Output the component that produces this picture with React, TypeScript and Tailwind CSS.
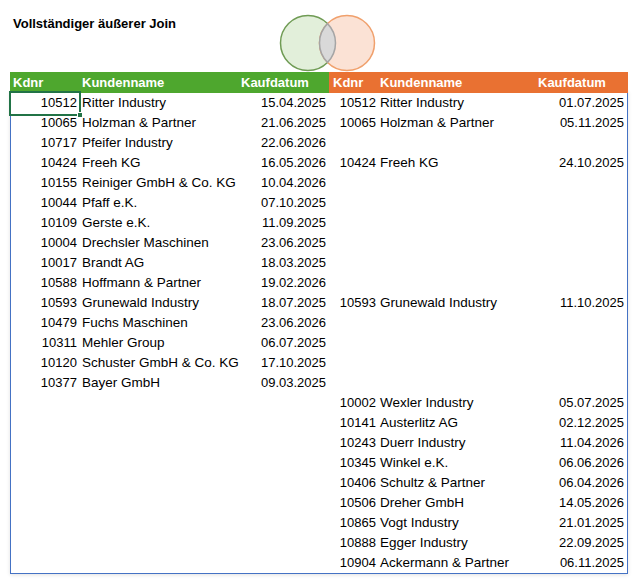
type Row = { id: string; name: string; date: string };

const left: (Row | null)[] = [
  { id: "10512", name: "Ritter Industry", date: "15.04.2025" },
  { id: "10065", name: "Holzman & Partner", date: "21.06.2025" },
  { id: "10717", name: "Pfeifer Industry", date: "22.06.2026" },
  { id: "10424", name: "Freeh KG", date: "16.05.2026" },
  { id: "10155", name: "Reiniger GmbH & Co. KG", date: "10.04.2026" },
  { id: "10044", name: "Pfaff e.K.", date: "07.10.2025" },
  { id: "10109", name: "Gerste e.K.", date: "11.09.2025" },
  { id: "10004", name: "Drechsler Maschinen", date: "23.06.2025" },
  { id: "10017", name: "Brandt AG", date: "18.03.2025" },
  { id: "10588", name: "Hoffmann & Partner", date: "19.02.2026" },
  { id: "10593", name: "Grunewald Industry", date: "18.07.2025" },
  { id: "10479", name: "Fuchs Maschinen", date: "23.06.2026" },
  { id: "10311", name: "Mehler Group", date: "06.07.2025" },
  { id: "10120", name: "Schuster GmbH & Co. KG", date: "17.10.2025" },
  { id: "10377", name: "Bayer GmbH", date: "09.03.2025" },
  null, null, null, null, null, null, null, null, null,
];

const right: (Row | null)[] = [
  { id: "10512", name: "Ritter Industry", date: "01.07.2025" },
  { id: "10065", name: "Holzman & Partner", date: "05.11.2025" },
  null,
  { id: "10424", name: "Freeh KG", date: "24.10.2025" },
  null, null, null, null, null, null,
  { id: "10593", name: "Grunewald Industry", date: "11.10.2025" },
  null, null, null, null,
  { id: "10002", name: "Wexler Industry", date: "05.07.2025" },
  { id: "10141", name: "Austerlitz AG", date: "02.12.2025" },
  { id: "10243", name: "Duerr Industry", date: "11.04.2026" },
  { id: "10345", name: "Winkel e.K.", date: "06.06.2026" },
  { id: "10406", name: "Schultz & Partner", date: "06.04.2026" },
  { id: "10506", name: "Dreher GmbH", date: "14.05.2026" },
  { id: "10865", name: "Vogt Industry", date: "21.01.2025" },
  { id: "10888", name: "Egger Industry", date: "22.09.2025" },
  { id: "10904", name: "Ackermann & Partner", date: "06.11.2025" },
];

const cols = "grid grid-cols-[70px_159px_90px_49px_158px_92px]";

export default function App() {
  return (
    <div className="h-[584px] w-[640px] bg-white font-['Liberation_Sans',Arial,sans-serif] text-black">
      <div className="flex h-[72px] items-start">
        <h1 className="ml-[13px] mt-[16px] w-[265px] text-[13px] font-bold leading-[16px]">
          Vollständiger äußerer Join
        </h1>
        <Venn />
      </div>

      <div className="ml-[10px] w-[618px]">
        <div className={`${cols} h-[19px] text-[13px] font-bold leading-[21px] text-white`}>
          <div className="bg-[#4ea72e] pl-[3px]">Kdnr</div>
          <div className="bg-[#4ea72e] pl-[2px]">Kundenname</div>
          <div className="bg-[#4ea72e] pl-[2px]">Kaufdatum</div>
          <div className="bg-[#e97132] pl-[4px]">Kdnr</div>
          <div className="bg-[#e97132] pl-[2px]">Kundenname</div>
          <div className="bg-[#e97132] pl-[2px]">Kaufdatum</div>
        </div>

        <div className="pt-px pb-[2px] shadow-[inset_0_0_0_1px_#4472c4,0_1px_4px_rgba(0,0,0,0.12)]">
          {left.map((l, i) => {
            const r = right[i];
            return (
              <div key={i} className={`${cols} h-[20px] leading-[22px]`}>
                <div className="relative pr-[3px] text-right text-[13px]">
                  {l?.id}
                  {i === 0 && (
                    <>
                      <span className="absolute -left-px -top-px -right-px -bottom-[2px] border-2 border-[#217346]" />
                      <span className="absolute -bottom-[4px] -right-[3px] h-[6px] w-[6px] border border-white bg-[#217346]" />
                    </>
                  )}
                </div>
                <div className="truncate pl-[2px] text-[13.5px]">{l?.name}</div>
                <div className="pr-[3px] text-right text-[13px]">{l?.date}</div>
                <div className="pr-[2px] text-right text-[13px]">{r?.id}</div>
                <div className="truncate pl-[2px] text-[13.5px]">{r?.name}</div>
                <div className="pr-[4px] text-right text-[13px]">{r?.date}</div>
              </div>
            );
          })}
        </div>
      </div>
    </div>
  );
}

function Venn() {
  return (
    <svg className="mt-[13px]" width="100" height="60" viewBox="0 0 100 60">
      <circle cx="30" cy="30" r="27.5" fill="#e2efda" stroke="#6f9b54" strokeWidth="1.5" />
      <circle cx="69" cy="30" r="27.5" fill="#fbe2d5" stroke="#f0a06c" strokeWidth="1.5" />
      <path
        d="M49.5 10.61 A27.5 27.5 0 0 1 49.5 49.39 A27.5 27.5 0 0 1 49.5 10.61 Z"
        fill="#d9d9d9"
        stroke="#a5a5a5"
        strokeWidth="1.5"
      />
    </svg>
  );
}
